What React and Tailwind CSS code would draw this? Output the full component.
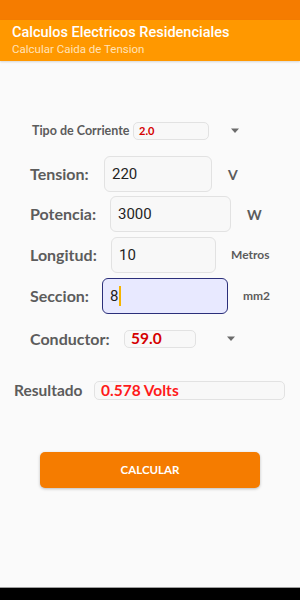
import React from 'react';

const Caret = () => (
  <svg width="10" height="6" viewBox="0 0 10 6" className="fill-[#6b6b6b]">
    <path d="M1 0.5h8L5 5z" />
  </svg>
);

const Field = ({ value, focused, className }) => (
  <div
    className={
      'h-[36px] flex items-center pl-[7px] rounded-[6px] border text-[15px] text-[#1f1f1f] ' +
      (focused ? 'bg-[#e8e9ff] border-[#2b2f7a]' : 'bg-[#f8f8f8] border-[#e2e2e2]') +
      ' ' + className
    }
    style={{ fontFamily: 'Roboto, sans-serif' }}
  >
    <span>{value}</span>
    {focused && <span className="ml-[1px] w-[2px] h-[20px] bg-[#f5b400]" />}
  </div>
);

export default function App() {
  const label = 'font-bold text-[#5c5c5c]';
  return (
    <div className="w-[300px] h-[600px] bg-[#fafafa] flex flex-col" style={{ fontFamily: 'Lato, "Open Sans", sans-serif' }}>
      <div className="h-[20px] bg-[#f57c00]" />
      <div className="h-[41px] bg-[#ff9800] px-[12px] pt-[4px] shadow-[0_1px_2px_rgba(0,0,0,0.15)]" style={{ fontFamily: 'Roboto, sans-serif' }}>
        <div className="text-white text-[14.5px] font-medium leading-[18px]">Calculos Electricos Residenciales</div>
        <div className="text-[#ffe2b8] text-[11.5px] leading-[15px]">Calcular Caida de Tension</div>
      </div>

      <div className="mt-[61px] flex items-center h-[18px] pl-[32px]">
        <span className={label + ' text-[12.5px] w-[101px]'}>Tipo de Corriente</span>
        <div className="w-[76px] h-[18px] rounded-[5px] border border-[#e2e2e2] bg-[#f8f8f8] pl-[5px] flex items-center text-[11px] font-bold text-[#d50000]">2.0</div>
        <div className="ml-[21px]"><Caret /></div>
      </div>

      <div className="mt-[16px] flex items-center pl-[30px]">
        <span className={label + ' text-[16px] w-[74px]'}>Tension:</span>
        <Field value="220" className="w-[108px]" />
        <span className={label + ' text-[14px] ml-[16px]'}>V</span>
      </div>

      <div className="mt-[4px] flex items-center pl-[30px]">
        <span className={label + ' text-[16px] w-[80px]'}>Potencia:</span>
        <Field value="3000" className="w-[121px]" />
        <span className={label + ' text-[14px] ml-[16px]'}>W</span>
      </div>

      <div className="mt-[5px] flex items-center pl-[30px]">
        <span className={label + ' text-[16px] w-[81px]'}>Longitud:</span>
        <Field value="10" className="w-[105px] h-[35px]" />
        <span className={label + ' text-[12px] ml-[15px]'}>Metros</span>
      </div>

      <div className="mt-[5px] flex items-center pl-[30px]">
        <span className={label + ' text-[16px] w-[72px]'}>Seccion:</span>
        <Field value="8" focused className="w-[126px] h-[35px]" />
        <span className={label + ' text-[12px] ml-[15px]'}>mm2</span>
      </div>

      <div className="mt-[16px] flex items-center h-[18px] pl-[30px]">
        <span className={label + ' text-[16px] w-[94px]'}>Conductor:</span>
        <div className="w-[72px] h-[18px] rounded-[5px] border border-[#e2e2e2] bg-[#f8f8f8] pl-[6px] flex items-center text-[15.5px] font-bold text-[#d50000]">59.0</div>
        <div className="ml-[30px]"><Caret /></div>
      </div>

      <div className="mt-[33px] flex items-center h-[19px] pl-[14px]">
        <span className={label + ' text-[15.5px] w-[80px]'}>Resultado</span>
        <div className="w-[191px] h-[19px] rounded-[5px] border border-[#e2e2e2] bg-[#f8f8f8] pl-[6px] flex items-center text-[15.5px] font-bold text-[#ff1a1a]">0.578 Volts</div>
      </div>

      <div className="mt-[52px] flex justify-center">
        <button className="w-[220px] h-[36px] rounded-[5px] bg-[#f57c00] text-white text-[11.5px] font-bold shadow-[0_1px_3px_rgba(0,0,0,0.25)]">CALCULAR</button>
      </div>

      <div className="flex-1" />
      <div className="h-[1px] bg-[#9e9e9e]" />
      <div className="h-[12px] bg-black" />
    </div>
  );
}
